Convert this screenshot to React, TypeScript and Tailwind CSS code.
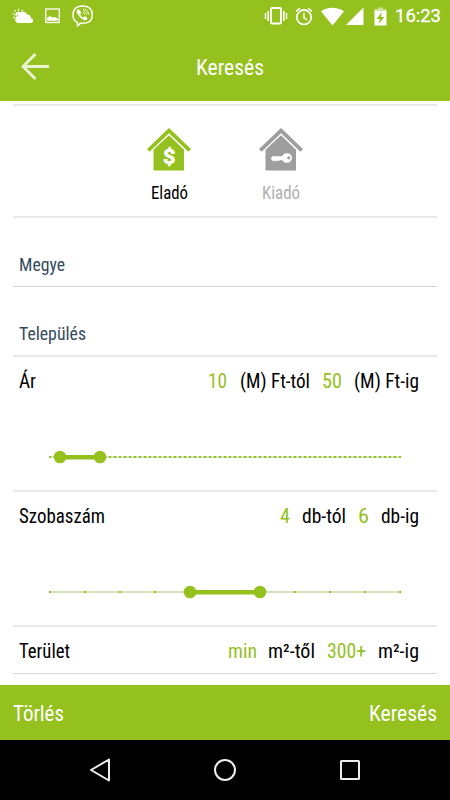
import { useLayoutEffect, useRef, useState } from "react";

type FitProps = { text: string; className: string };

/** A single line of text, condensed or expanded to fill its box's width. */
function Fit({ text, className }: FitProps) {
  const box = useRef<HTMLSpanElement>(null);
  const inner = useRef<HTMLSpanElement>(null);
  const [scale, setScale] = useState(1);
  useLayoutEffect(() => {
    const measure = () => {
      if (box.current && inner.current && inner.current.offsetWidth > 0) {
        inner.current.style.transform = "none";
        const natural = inner.current.getBoundingClientRect().width;
        const next = box.current.getBoundingClientRect().width / natural;
        inner.current.style.transform = `scaleX(${next})`;
        setScale(next);
      }
    };
    measure();
    document.fonts?.ready.then(measure);
  }, [text]);
  return (
    <span ref={box} className={`block shrink-0 whitespace-nowrap ${className}`}>
      <span ref={inner} className="inline-block origin-left" style={{ transform: `scaleX(${scale})` }}>
        {text}
      </span>
    </span>
  );
}

function StatusBar() {
  return (
    <div className="flex h-8 items-center text-white">
      <svg className="ml-3 shrink-0" width="22" height="16" viewBox="0 0 22 16" fill="currentColor">
        <path d="M6.500 15a3.600 3.600 0 0 1-.6-7.100 5 5 0 0 1 9.300-1.600 4.400 4.400 0 0 1 3.800 3.900A2.500 2.500 0 0 1 19.600 15z" />
        <path d="M3.200 7.800a3.500 3.500 0 0 1 5.200-3.600L6 6.400 4.500 8z" />
        <path d="M6.600.8v2M2.400 2.200l1.400 1.500M.5 5.800l2 .3M10.800 1.800 9.700 3.400M1 9.800l1.700-.8" stroke="currentColor" strokeWidth="1.100" />
      </svg>
      <svg className="ml-[11px] shrink-0" width="15" height="16" viewBox="0 0 15 16">
        <rect x=".75" y="1" width="13.500" height="13.500" fill="none" stroke="currentColor" strokeWidth="1.300" />
        <path d="M2 12.800V9.700l3-1.700 2.200 1.500 2.500-.5L13 10.500v2.300z" fill="currentColor" />
      </svg>
      <svg className="ml-3 shrink-0" width="22" height="22" viewBox="0 0 22 22" fill="none" stroke="currentColor">
        <path d="M10.500 1C4 1 1 3.600 1 9.800c0 4 1.300 6.600 4.500 7.800v3.200l3-2.500c8.300.5 11.800-2 11.800-8.500C20.300 3.600 17.200 1 10.500 1z" strokeWidth="1.500" />
        <path d="M6 4.200c-1.700.8-1.700 2.300-.9 3.800 1.600 3.200 3.800 5.500 7 7 1.900.8 3.400-.3 3.200-1.800-.8-1.200-2-2-3.100-1.800l-1 1c-1.400-.6-2.500-1.800-3-3.200l1-1.200C8.900 6.500 7.400 4.300 6 4.200z" fill="currentColor" stroke="none" />
        <path d="M11 4.200c3.400 0 5.500 2 5.600 5.500M11.100 6.200c2.200.1 3.400 1.300 3.500 3.400M11.200 8c.9.1 1.300.6 1.400 1.400" strokeWidth=".9" />
      </svg>
      <svg className="ml-[170px] shrink-0" width="24" height="18" viewBox="0 0 24 18" fill="none" stroke="currentColor">
        <rect x="7" y="1" width="10" height="15.500" rx=".8" strokeWidth="1.800" />
        <path d="M4.200 4v10M19.800 4v10" strokeWidth="1.600" />
        <path d="M1.500 6v6M22.500 6v6" strokeWidth="1.500" />
      </svg>
      <svg className="ml-[7px] shrink-0" width="18" height="19" viewBox="0 0 18 19" fill="none" stroke="currentColor">
        <circle cx="9" cy="10.200" r="7.200" strokeWidth="1.800" />
        <path d="M9 6v4.800l3 2" strokeWidth="1.400" />
        <path d="M1 4.300 5 1M17 4.300 13 1" strokeWidth="1.500" />
      </svg>
      <svg className="ml-[8px] shrink-0" width="23" height="19" viewBox="0 0 23 19" fill="currentColor">
        <path d="M0 4.300C6.500-.4 16.500-.4 23 4.300L11.500 18.500z" />
      </svg>
      <svg className="ml-0.5 shrink-0" width="18" height="18" viewBox="0 0 18 18" fill="currentColor">
        <path d="M0 18 17.500.5V18z" />
      </svg>
      <svg className="ml-[10px] shrink-0" width="13" height="19" viewBox="0 0 13 19">
        <path d="M4 .5h5V2h3.500v3H.5V2H4z" fill="currentColor" opacity=".55" />
        <path d="M.5 4h12v14.500H.5z" fill="currentColor" />
        <path d="M7.800 5 2.700 12h3.100l-.9 4.800L10.300 10H7z" fill="#94c11e" />
      </svg>
      <Fit text="16:23" className="ml-[8px] w-[46px] text-[18px] leading-8 [-webkit-text-stroke:0.3px_white] font-['Roboto',sans-serif]" />
    </div>
  );
}

function HouseIcon({ kind }: { kind: "sale" | "rent" }) {
  return (
    <svg width="44" height="43" viewBox="0 0 44 43" fill="currentColor">
      <path d="M22 0 44 21l-2.600 2.700L22 5.300 2.600 23.700 0 21z" />
      <path d="M22 7.300 37 21.800v20.700H6.500V21.800z" />
      {kind === "sale" ? (
        <text x="16" y="35.500" textLength="12.500" lengthAdjust="spacingAndGlyphs" fill="#fff" stroke="#fff" strokeWidth=".6" className="font-['Roboto',sans-serif] text-[20px] font-bold">$</text>
      ) : (
        <g>
          <path d="M33 29.800a5.200 5.200 0 0 1-9.700 2.400h-2.500l-1.200 1-1.300-1-1.300 1.200-1.500-1-1.200 1.100-2.500-2.700 1.500-2.600h9.800A5.200 5.200 0 0 1 33 29.800z" fill="#fff" />
          <circle cx="29.800" cy="29.800" r="1.600" />
        </g>
      )}
    </svg>
  );
}

function Slider({ steps, from, to }: { steps: number; from: number; to: number }) {
  const x = (n: number) => 10 + (n * 350) / steps;
  return (
    <svg className="ml-10 block" width="370" height="14" viewBox="0 0 370 14">
      <rect x="10" y="6" width="350" height="2" fill="#d3e2b8" />
      {Array.from({ length: steps + 1 }, (_, i) => (
        <rect key={i} x={x(i) - 1} y="6" width="2" height="2" fill="#94c11e" />
      ))}
      <rect x={x(from)} y="5" width={x(to) - x(from)} height="4.500" fill="#94c11e" />
      <circle cx={x(from)} cy="7" r="6.300" fill="#94c11e" />
      <circle cx={x(to)} cy="7" r="6.300" fill="#94c11e" />
    </svg>
  );
}

type Part = { text: string; className: string };

function RangeRow({ label, parts }: { label: Part; parts: Part[] }) {
  return (
    <div className="flex h-12 items-center pl-1.5 pr-[18px] pt-0.5 text-[19.5px] leading-6 text-black">
      <Fit text={label.text} className={label.className} />
      <div className="ml-auto flex">
        {parts.map((p) => (
          <Fit key={p.text} text={p.text} className={p.className} />
        ))}
      </div>
    </div>
  );
}

export default function App() {
  return (
    <div className="flex h-[800px] w-[450px] flex-col overflow-hidden bg-white font-['Roboto_Condensed','Roboto',sans-serif]">
      <header className="h-[101px] shrink-0 bg-[#94c11e] text-white">
        <StatusBar />
        <div className="flex h-[69px] items-center">
          <svg className="ml-[21px] shrink-0" width="29" height="28" viewBox="0 0 29 28" fill="none" stroke="#e9f3d2" strokeWidth="3">
            <path d="M28 13.500H3M14.500 1 2 13.500 14.500 26" />
          </svg>
          <Fit text="Keresés" className="ml-[146px] mt-0.5 w-[68px] text-[22px] leading-8" />
        </div>
      </header>

      <main className="mx-[13px] h-[584px] shrink-0 pt-[3px]">
        <section className="flex h-[114px] border-y-2 border-[#e9e9e9] pt-[22px] text-[18px] leading-6">
          <div className="ml-[134px] flex w-11 flex-col items-center text-[#94c11e]">
            <HouseIcon kind="sale" />
            <Fit text="Eladó" className="mt-[10px] w-[37px] text-black" />
          </div>
          <div className="ml-[68px] flex w-11 flex-col items-center text-[#9e9e9e]">
            <HouseIcon kind="rent" />
            <Fit text="Kiadó" className="mt-[10px] w-[38px] text-[#b0b0b0]" />
          </div>
        </section>
        <section className="h-[69px] border-b border-[#d4d4d4] pl-1.5 pt-[35px] text-[18px] leading-6 text-[#34495e]">
          <Fit text="Megye" className="w-[46px]" />
        </section>
        <section className="h-[70px] border-b-2 border-[#e9e9e9] pl-1.5 pt-[35px] text-[18px] leading-6 text-[#34495e]">
          <Fit text="Település" className="w-[67px]" />
        </section>
        <section className="h-[135px] border-b-2 border-[#e9e9e9]">
          <RangeRow
            label={{ text: "Ár", className: "w-[17px]" }}
            parts={[
              { text: "10", className: "w-[19px] text-[#94c11e]" },
              { text: "(M) Ft-tól", className: "ml-[13px] w-[70px]" },
              { text: "50", className: "ml-[12px] w-[20px] text-[#94c11e]" },
              { text: "(M) Ft-ig", className: "ml-[12px] w-[65px]" },
            ]}
          />
          <div className="-ml-[13px] pt-[45px]"><Slider steps={70} from={2} to={10} /></div>
        </section>
        <section className="h-[135px] border-b-2 border-[#e9e9e9]">
          <RangeRow
            label={{ text: "Szobaszám", className: "w-[86px]" }}
            parts={[
              { text: "4", className: "w-[10px] text-[#94c11e]" },
              { text: "db-tól", className: "ml-[12px] w-[44px]" },
              { text: "6", className: "ml-[12px] w-[11px] text-[#94c11e]" },
              { text: "db-ig", className: "ml-[12px] w-[38px]" },
            ]}
          />
          <div className="-ml-[13px] pt-[45px]"><Slider steps={10} from={4} to={6} /></div>
        </section>
        <section className="h-[47px] border-b border-[#d8d8d8]">
          <RangeRow
            label={{ text: "Terület", className: "w-[51px]" }}
            parts={[
              { text: "min", className: "w-[29px] text-[#94c11e]" },
              { text: "m²-től", className: "ml-[11px] w-[47px]" },
              { text: "300+", className: "ml-[12px] w-[39px] text-[#94c11e]" },
              { text: "m²-ig", className: "ml-[12px] w-[41px]" },
            ]}
          />
        </section>
      </main>

      <footer className="flex h-[55px] shrink-0 items-center justify-between bg-[#94c11e] px-[13px] pt-[3px] text-[22px] leading-8 text-white">
        <Fit text="Törlés" className="w-[51px]" />
        <Fit text="Keresés" className="w-[68px]" />
      </footer>
      <nav className="flex h-[60px] shrink-0 items-center bg-black">
        <svg className="ml-[89px]" width="22" height="26" viewBox="0 0 22 26" fill="none" stroke="#eee" strokeWidth="2">
          <path d="M20 2.500v21L2 13z" strokeLinejoin="round" />
        </svg>
        <svg className="ml-[102px]" width="24" height="24" viewBox="0 0 24 24" fill="none" stroke="#eee" strokeWidth="2">
          <circle cx="12" cy="12" r="10" />
        </svg>
        <svg className="ml-[103px]" width="20" height="20" viewBox="0 0 20 20" fill="none" stroke="#eee" strokeWidth="2">
          <rect x="1" y="1" width="18" height="18" rx=".5" />
        </svg>
      </nav>
    </div>
  );
}
